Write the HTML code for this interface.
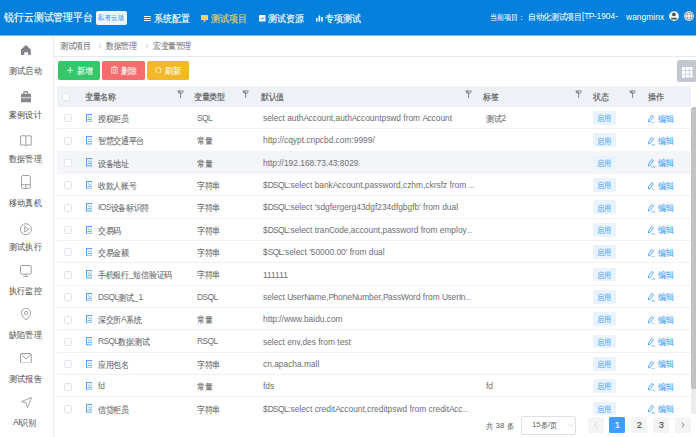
<!DOCTYPE html><html><head><meta charset="utf-8"><style>
html,body{margin:0;padding:0;width:696px;height:437px;overflow:hidden;background:#fff;font-family:'Liberation Sans',sans-serif;}
.r{position:absolute;display:block}
.t{position:absolute;white-space:nowrap;transform-origin:0 0;font-size:20px;line-height:20px}
.l,.u,.d{position:relative;top:-3.4px}
.l,.u,.d{font-size:1.088em}
.u{letter-spacing:-0.07em}
.e{font-size:1.088em;position:relative;top:-3.4px;letter-spacing:-0.08em;color:#9a9a9a}
.d{letter-spacing:0em}
.c{display:inline-block;transform:scaleY(1.12);transform-origin:50% 90%;-webkit-text-stroke-width:var(--sw,0.12px)}
.l,.u,.d,.e{-webkit-text-stroke-width:var(--sw,0px)}
.l,.u,.d{color:var(--lc,inherit)}
.cb{width:8px;height:8px;box-sizing:border-box;border:0.8px solid #e1e4ea;border-radius:1.5px;background:#fff}
</style></head><body><div class="r" style="left:0.00px;top:0.00px;width:696.00px;height:35.60px;background:#0280dc;"></div>
<div class="r" style="left:0.00px;top:35.00px;width:696.00px;height:1.00px;background:linear-gradient(#2b90e0,#cfe6f8);"></div>
<div class="t" style="left:3.80px;top:12.80px;transform:scale(0.4950);color:#ffffff;font-weight:400;--sw:0.3px;"><span class="c">锐行云测试管理平台</span></div>
<div class="r" style="left:96.00px;top:11.00px;width:31.00px;height:14.00px;background:#eef5fe;border-radius:2px"></div>
<div class="t" style="left:98.40px;top:15.40px;transform:scale(0.3250);color:#4d9af0;font-weight:400;--sw:0.2px;"><span class="c">私有云版</span></div>
<svg class="r" style="left:144.00px;top:15.60px" width="7" height="5" viewBox="0 0 7 5"><rect x="0" y="0" width="6.7" height="1" fill="#fff"/><rect x="0" y="2" width="6.7" height="1" fill="#fff"/><rect x="0" y="4" width="6.7" height="1" fill="#fff"/></svg>
<div class="t" style="left:154.00px;top:14.30px;transform:scale(0.4450);color:#ffffff;font-weight:400;--sw:0.3px;"><span class="c">系统配置</span></div>
<svg class="r" style="left:201.30px;top:15.00px" width="7" height="6.5" viewBox="0 0 7 6.5"><rect x="0" y="0" width="7" height="5" rx="0.6" fill="#f5d060"/><rect x="2.5" y="5" width="2" height="1.5" fill="#f5d060"/></svg>
<div class="t" style="left:210.80px;top:14.30px;transform:scale(0.4450);color:#f5d060;font-weight:400;--sw:0.3px;"><span class="c">测试项目</span></div>
<svg class="r" style="left:259.00px;top:15.00px" width="6.5" height="6.5" viewBox="0 0 6.5 6.5"><rect x="0" y="0" width="6.5" height="6.5" rx="0.5" fill="#fff"/><path d="M1.2 4.6 L2.8 3 L3.8 4 L5.4 2.2" stroke="#0780dd" stroke-width="0.9" fill="none"/></svg>
<div class="t" style="left:268.40px;top:14.30px;transform:scale(0.4450);color:#ffffff;font-weight:400;--sw:0.3px;"><span class="c">测试资源</span></div>
<svg class="r" style="left:316.00px;top:15.00px" width="7" height="6.5" viewBox="0 0 7 6.5"><rect x="0" y="3" width="1.6" height="3.5" fill="#fff"/><rect x="2.6" y="0.5" width="1.6" height="6" fill="#fff"/><rect x="5.2" y="2" width="1.6" height="4.5" fill="#fff"/></svg>
<div class="t" style="left:325.20px;top:14.30px;transform:scale(0.4450);color:#ffffff;font-weight:400;--sw:0.3px;"><span class="c">专项测试</span></div>
<div class="t" style="left:490.20px;top:13.70px;transform:scale(0.3550);color:#ffffff;font-weight:400;"><span class="c">当前项目：</span></div>
<div class="t" style="left:528.00px;top:13.90px;transform:scale(0.3850);color:#ffffff;font-weight:400;"><span class="c">自动化测试项目</span><span class="l">[</span><span class="u">TP</span><span class="l">-</span><span class="d">1904</span><span class="l">-</span></div>
<div class="t" style="left:625.80px;top:15.20px;transform:scale(0.3900);color:#ffffff;font-weight:400;"><span class="l">wangminx</span></div>
<svg class="r" style="left:668.80px;top:11.00px" width="10.5" height="10.5" viewBox="0 0 10.5 10.5"><circle cx="5.0" cy="5.1" r="4.9" fill="#fff"/><circle cx="4.9" cy="3.4" r="1.9" fill="#555"/><rect x="2.0" y="6.8" width="6.0" height="1.7" rx="0.4" fill="#555"/></svg>
<svg class="r" style="left:684.20px;top:11.00px" width="10.5" height="10.5" viewBox="0 0 10.5 10.5"><circle cx="4.95" cy="5.1" r="4.9" fill="#fff"/><circle cx="4.95" cy="5.1" r="3.9" fill="none" stroke="#9a9a9a" stroke-width="0.8"/><ellipse cx="4.95" cy="5.1" rx="1.9" ry="3.9" fill="none" stroke="#9a9a9a" stroke-width="0.7"/><path d="M1.2 3.4 H8.7 M1.2 6.8 H8.7" stroke="#9a9a9a" stroke-width="0.7"/></svg>
<div class="r" style="left:52.70px;top:36.00px;width:1.00px;height:401.00px;background:#eeeeee;"></div>
<div class="t" style="left:9.00px;top:66.60px;transform:scale(0.4100);color:#555555;font-weight:400;"><span class="c">测试启动</span></div>
<div class="t" style="left:9.00px;top:110.60px;transform:scale(0.4100);color:#555555;font-weight:400;"><span class="c">案例设计</span></div>
<div class="t" style="left:9.00px;top:154.60px;transform:scale(0.4100);color:#555555;font-weight:400;"><span class="c">数据管理</span></div>
<div class="t" style="left:9.00px;top:198.60px;transform:scale(0.4100);color:#555555;font-weight:400;"><span class="c">移动真机</span></div>
<div class="t" style="left:9.00px;top:242.60px;transform:scale(0.4100);color:#555555;font-weight:400;"><span class="c">测试执行</span></div>
<div class="t" style="left:9.00px;top:286.60px;transform:scale(0.4100);color:#555555;font-weight:400;"><span class="c">执行监控</span></div>
<div class="t" style="left:9.00px;top:330.60px;transform:scale(0.4100);color:#555555;font-weight:400;"><span class="c">缺陷管理</span></div>
<div class="t" style="left:9.00px;top:374.60px;transform:scale(0.4100);color:#555555;font-weight:400;"><span class="c">测试报告</span></div>
<div class="t" style="left:12.80px;top:418.60px;transform:scale(0.4100);color:#555555;font-weight:400;"><span class="u">AI</span><span class="c">识别</span></div>
<svg class="r" style="left:21.10px;top:44.80px" width="10" height="10.5" viewBox="0 0 10 10.5"><path d="M4.95 0 L9.8 4.4 V10.3 H7.1 V7.2 H3.2 V10.3 H0 V4.4 Z" fill="#808287"/></svg>
<svg class="r" style="left:21.10px;top:91.20px" width="10.2" height="11.5" viewBox="0 0 10.2 11.5"><path d="M2.3 2.9 V1.2 Q2.3 0.1 3.4 0.1 H6.0 Q7.1 0.1 7.1 1.2 V2.9 H5.9 V1.3 H3.5 V2.9 Z" fill="#85878c"/><rect x="0" y="2.8" width="10.1" height="8.5" rx="0.5" fill="#85878c"/><rect x="0" y="5.9" width="10.1" height="1.5" fill="#c9cacd"/></svg>
<svg class="r" style="left:20.20px;top:135.20px" width="12" height="11" viewBox="0 0 12 11"><path d="M0.6 1.0 Q3.2 0.3 5.9 1.0 Q8.6 0.3 11.2 1.0 V10.1 Q8.6 9.6 5.9 10.4 Q3.2 9.6 0.6 10.1 Z M5.9 1.0 V10.4" fill="none" stroke="#9b9b9b" stroke-width="0.95"/></svg>
<svg class="r" style="left:21.20px;top:175.10px" width="10" height="14" viewBox="0 0 10 14"><rect x="0.5" y="0.5" width="8.8" height="12.9" rx="1.6" fill="none" stroke="#9b9b9b" stroke-width="0.95"/><path d="M0.5 9.7 H9.3 M4.9 9.7 V13.2" stroke="#9b9b9b" stroke-width="0.9"/></svg>
<svg class="r" style="left:20.20px;top:222.90px" width="12" height="12.5" viewBox="0 0 12 12.5"><circle cx="5.9" cy="6.2" r="5.5" fill="none" stroke="#9b9b9b" stroke-width="0.95"/><path d="M4.7 3.4 L8.7 6.2 L4.7 9.0 Z" fill="none" stroke="#9b9b9b" stroke-width="0.95" stroke-linejoin="round"/></svg>
<svg class="r" style="left:20.20px;top:264.60px" width="12" height="12.5" viewBox="0 0 12 12.5"><rect x="0.5" y="0.5" width="10.8" height="8.6" rx="1.4" fill="none" stroke="#9b9b9b" stroke-width="0.95"/><path d="M5.9 9.1 V11.6 M3.1 11.7 H8.8" stroke="#9b9b9b" stroke-width="0.95"/></svg>
<svg class="r" style="left:21.10px;top:307.60px" width="10.2" height="12.6" viewBox="0 0 10.2 12.6"><path d="M5.1 12.1 C2.2 8.9 0.5 6.6 0.5 4.8 A4.6 4.6 0 0 1 9.7 4.8 C9.7 6.6 8 8.9 5.1 12.1 Z" fill="none" stroke="#9b9b9b" stroke-width="0.95"/><circle cx="5.1" cy="5.1" r="1.7" fill="none" stroke="#9b9b9b" stroke-width="0.95"/></svg>
<svg class="r" style="left:20.20px;top:352.80px" width="12" height="10.6" viewBox="0 0 12 10.6"><rect x="0.5" y="0.5" width="10.8" height="9.6" rx="1.2" fill="none" stroke="#9b9b9b" stroke-width="0.95"/><path d="M1.2 1.2 L5.9 5.9 L10.6 1.2" fill="none" stroke="#9b9b9b" stroke-width="0.95"/></svg>
<svg class="r" style="left:21.00px;top:396.60px" width="11" height="11.4" viewBox="0 0 11 11.4"><path d="M10.5 0.5 L0.6 4.6 L5 5.8 L6.4 10.9 Z" fill="none" stroke="#9b9b9b" stroke-width="0.9" stroke-linejoin="round"/></svg>
<div class="t" style="left:59.60px;top:42.60px;transform:scale(0.3800);color:#707070;font-weight:400;"><span class="c">测试项目</span></div>
<svg class="r" style="left:97.50px;top:42.50px" width="4" height="6" viewBox="0 0 4 6"><path d="M0.6 0.5 L3.2 3 L0.6 5.5" fill="none" stroke="#c0c4cc" stroke-width="0.8"/></svg>
<div class="t" style="left:105.80px;top:42.60px;transform:scale(0.3800);color:#707070;font-weight:400;"><span class="c">数据管理</span></div>
<svg class="r" style="left:145.00px;top:42.50px" width="4" height="6" viewBox="0 0 4 6"><path d="M0.6 0.5 L3.2 3 L0.6 5.5" fill="none" stroke="#c0c4cc" stroke-width="0.8"/></svg>
<div class="t" style="left:152.80px;top:42.60px;transform:scale(0.3800);color:#707070;font-weight:400;"><span class="c">宏变量管理</span></div>
<div class="r" style="left:54.00px;top:56.00px;width:642.00px;height:1.00px;background:#e8e8e8;"></div>
<div class="r" style="left:58.00px;top:60.50px;width:42.00px;height:19.50px;background:#34c86a;border-radius:2px"></div>
<svg class="r" style="left:66.80px;top:66.60px" width="6.4" height="6.6" viewBox="0 0 6.4 6.6"><path d="M3.2 0.2 V6.4 M0.1 3.3 H6.3" stroke="#d9f5e3" stroke-width="1.1"/></svg>
<div class="t" style="left:76.80px;top:67.00px;transform:scale(0.3950);color:#ffffff;font-weight:400;"><span class="c">新增</span></div>
<div class="r" style="left:102.00px;top:60.50px;width:43.00px;height:19.50px;background:#f56c6c;border-radius:2px"></div>
<svg class="r" style="left:110.90px;top:65.80px" width="7.2" height="8.6" viewBox="0 0 7.2 8.6"><path d="M0.2 1.55 H6.8" stroke="#fde0e0" stroke-width="0.85"/><path d="M2.2 1.3 V0.5 H4.9 V1.3" fill="none" stroke="#fde0e0" stroke-width="0.75"/><path d="M0.75 1.6 V7.9 H6.25 V1.6" fill="none" stroke="#fde0e0" stroke-width="0.8"/><rect x="2.35" y="3.1" width="2.3" height="3.3" fill="none" stroke="#fde0e0" stroke-width="0.7"/></svg>
<div class="t" style="left:120.80px;top:67.00px;transform:scale(0.3950);color:#ffffff;font-weight:400;"><span class="c">删除</span></div>
<div class="r" style="left:147.00px;top:60.50px;width:42.20px;height:19.50px;background:#f3b82a;border-radius:2px"></div>
<svg class="r" style="left:155.40px;top:66.50px" width="7" height="6.8" viewBox="0 0 7 6.8"><path d="M0.75 3.0 A2.6 2.6 0 0 1 5.95 3.0" fill="none" stroke="#fdf0cf" stroke-width="0.9"/><path d="M5.95 3.8 A2.6 2.6 0 0 1 0.75 3.8" fill="none" stroke="#fdf0cf" stroke-width="0.9"/><path d="M4.9 2.4 L5.95 3.3 L6.9 2.4" fill="none" stroke="#fdf0cf" stroke-width="0.8"/><path d="M-0.2 4.4 L0.75 3.5 L1.8 4.4" fill="none" stroke="#fdf0cf" stroke-width="0.8"/></svg>
<div class="t" style="left:165.00px;top:66.80px;transform:scale(0.3950);color:#ffffff;font-weight:400;"><span class="c">刷新</span></div>
<div class="r" style="left:677.20px;top:60.00px;width:19.50px;height:21.60px;background:#c3c7cf;border-radius:2.5px"></div>
<svg class="r" style="left:681.60px;top:66.60px" width="11" height="11" viewBox="0 0 11 11"><rect x="0.00" y="0.00" width="3.1" height="3.1" fill="#fff"/><rect x="3.75" y="0.00" width="3.1" height="3.1" fill="#fff"/><rect x="7.50" y="0.00" width="3.1" height="3.1" fill="#fff"/><rect x="0.00" y="3.75" width="3.1" height="3.1" fill="#fff"/><rect x="3.75" y="3.75" width="3.1" height="3.1" fill="#fff"/><rect x="7.50" y="3.75" width="3.1" height="3.1" fill="#fff"/><rect x="0.00" y="7.50" width="3.1" height="3.1" fill="#fff"/><rect x="3.75" y="7.50" width="3.1" height="3.1" fill="#fff"/><rect x="7.50" y="7.50" width="3.1" height="3.1" fill="#fff"/></svg>
<div class="r" style="left:56.50px;top:86.00px;width:634.30px;height:20.80px;background:#eef1f6;"></div>
<div class="r cb" style="left:61.60px;top:92.60px"></div>
<div class="t" style="left:84.90px;top:94.30px;transform:scale(0.3850);color:#555555;font-weight:400;--sw:0.3px;"><span class="c">变量名称</span></div>
<div class="t" style="left:194.40px;top:94.30px;transform:scale(0.3850);color:#555555;font-weight:400;--sw:0.3px;"><span class="c">变量类型</span></div>
<div class="t" style="left:260.80px;top:94.30px;transform:scale(0.3850);color:#555555;font-weight:400;--sw:0.3px;"><span class="c">默认值</span></div>
<div class="t" style="left:483.40px;top:94.30px;transform:scale(0.3850);color:#555555;font-weight:400;--sw:0.3px;"><span class="c">标签</span></div>
<div class="t" style="left:592.80px;top:94.10px;transform:scale(0.3850);color:#555555;font-weight:400;--sw:0.3px;"><span class="c">状态</span></div>
<div class="t" style="left:647.80px;top:94.10px;transform:scale(0.3850);color:#555555;font-weight:400;--sw:0.3px;"><span class="c">操作</span></div>
<svg class="r" style="left:176.60px;top:89.80px" width="7.2" height="8" viewBox="0 0 7.2 8"><path d="M0.3 0.7 Q3.6 -0.3 6.9 0.7 Q6.6 2.9 4.1 3.9 V7.9 H3.1 V3.9 Q0.6 2.9 0.3 0.7 Z" fill="#85878b"/><circle cx="4.7" cy="1.7" r="0.9" fill="#dfe2e8"/><path d="M3.1 1.0 L3.6 3.2" stroke="#dfe2e8" stroke-width="0.4"/></svg>
<svg class="r" style="left:242.10px;top:89.80px" width="7.2" height="8" viewBox="0 0 7.2 8"><path d="M0.3 0.7 Q3.6 -0.3 6.9 0.7 Q6.6 2.9 4.1 3.9 V7.9 H3.1 V3.9 Q0.6 2.9 0.3 0.7 Z" fill="#85878b"/><circle cx="4.7" cy="1.7" r="0.9" fill="#dfe2e8"/><path d="M3.1 1.0 L3.6 3.2" stroke="#dfe2e8" stroke-width="0.4"/></svg>
<svg class="r" style="left:464.90px;top:89.80px" width="7.2" height="8" viewBox="0 0 7.2 8"><path d="M0.3 0.7 Q3.6 -0.3 6.9 0.7 Q6.6 2.9 4.1 3.9 V7.9 H3.1 V3.9 Q0.6 2.9 0.3 0.7 Z" fill="#85878b"/><circle cx="4.7" cy="1.7" r="0.9" fill="#dfe2e8"/><path d="M3.1 1.0 L3.6 3.2" stroke="#dfe2e8" stroke-width="0.4"/></svg>
<svg class="r" style="left:574.60px;top:89.80px" width="7.2" height="8" viewBox="0 0 7.2 8"><path d="M0.3 0.7 Q3.6 -0.3 6.9 0.7 Q6.6 2.9 4.1 3.9 V7.9 H3.1 V3.9 Q0.6 2.9 0.3 0.7 Z" fill="#85878b"/><circle cx="4.7" cy="1.7" r="0.9" fill="#dfe2e8"/><path d="M3.1 1.0 L3.6 3.2" stroke="#dfe2e8" stroke-width="0.4"/></svg>
<svg class="r" style="left:629.40px;top:89.80px" width="7.2" height="8" viewBox="0 0 7.2 8"><path d="M0.3 0.7 Q3.6 -0.3 6.9 0.7 Q6.6 2.9 4.1 3.9 V7.9 H3.1 V3.9 Q0.6 2.9 0.3 0.7 Z" fill="#85878b"/><circle cx="4.7" cy="1.7" r="0.9" fill="#dfe2e8"/><path d="M3.1 1.0 L3.6 3.2" stroke="#dfe2e8" stroke-width="0.4"/></svg>
<div class="r" style="left:0;top:106.8px;width:696px;height:308.40px;overflow:hidden">
<div class="r" style="left:56.50px;top:21.45px;width:634.30px;height:0.90px;background:#eff1f5;"></div>
<div class="r cb" style="left:64.00px;top:7.60px"></div>
<svg class="r" style="left:85.60px;top:7.00px" width="6.6" height="8.4" viewBox="0 0 6.6 8.4"><rect x="0.5" y="0.55" width="5.6" height="7.4" fill="none" stroke="#4a9ff5" stroke-width="0.95"/><path d="M2.3 2.3 Q2.5 3.9 4.6 3.9 M1.6 5.6 H5.0" fill="none" stroke="#4a9ff5" stroke-width="0.85"/></svg>
<div class="t" style="left:97.60px;top:9.20px;transform:scale(0.3850);color:#606266;font-weight:400;--lc:#6c6e72;"><span class="c">授权柜员</span></div>
<div class="t" style="left:196.80px;top:9.20px;transform:scale(0.3850);color:#606266;font-weight:400;--lc:#6c6e72;"><span class="u">SQL</span></div>
<div class="t" style="left:262.80px;top:9.30px;transform:scale(0.3850);color:#606266;font-weight:400;--lc:#6c6e72;"><span class="l">select auth</span><span class="u">A</span><span class="l">ccount,auth</span><span class="u">A</span><span class="l">ccountpswd from </span><span class="u">A</span><span class="l">ccount</span></div>
<div class="t" style="left:485.80px;top:9.20px;transform:scale(0.3850);color:#606266;font-weight:400;--lc:#6c6e72;"><span class="c">测试</span><span class="d">2</span></div>
<div class="r" style="left:592.60px;top:4.30px;width:23.00px;height:13.70px;background:#e9f3fe;border-radius:2px"></div>
<div class="t" style="left:596.80px;top:8.40px;transform:scale(0.3450);color:#4ea5fb;font-weight:400;"><span class="c">启用</span></div>
<svg class="r" style="left:647.80px;top:7.90px" width="7.2" height="8.6" viewBox="0 0 7.2 8.6"><path d="M0.55 7.0 L0.45 5.1 L3.75 0.5 L5.5 1.7 L2.25 6.3 Z" fill="none" stroke="#409eff" stroke-width="0.85" stroke-linejoin="round"/><path d="M3.5 7.95 H6.9" stroke="#409eff" stroke-width="0.8"/></svg>
<div class="t" style="left:657.60px;top:8.80px;transform:scale(0.3850);color:#409eff;font-weight:400;"><span class="c">编辑</span></div>
<div class="r" style="left:56.50px;top:43.80px;width:634.30px;height:0.90px;background:#eff1f5;"></div>
<div class="r cb" style="left:64.00px;top:29.95px"></div>
<svg class="r" style="left:85.60px;top:29.35px" width="6.6" height="8.4" viewBox="0 0 6.6 8.4"><rect x="0.5" y="0.55" width="5.6" height="7.4" fill="none" stroke="#4a9ff5" stroke-width="0.95"/><path d="M2.3 2.3 Q2.5 3.9 4.6 3.9 M1.6 5.6 H5.0" fill="none" stroke="#4a9ff5" stroke-width="0.85"/></svg>
<div class="t" style="left:97.60px;top:31.55px;transform:scale(0.3850);color:#606266;font-weight:400;--lc:#6c6e72;"><span class="c">智慧交通平台</span></div>
<div class="t" style="left:196.80px;top:31.55px;transform:scale(0.3850);color:#606266;font-weight:400;--lc:#6c6e72;"><span class="c">常量</span></div>
<div class="t" style="left:262.80px;top:31.65px;transform:scale(0.3850);color:#606266;font-weight:400;--lc:#6c6e72;"><span class="l">http://cqypt.cnpcbd.com:</span><span class="d">9999</span><span class="l">/</span></div>
<div class="r" style="left:592.60px;top:26.65px;width:23.00px;height:13.70px;background:#e9f3fe;border-radius:2px"></div>
<div class="t" style="left:596.80px;top:30.75px;transform:scale(0.3450);color:#4ea5fb;font-weight:400;"><span class="c">启用</span></div>
<svg class="r" style="left:647.80px;top:30.25px" width="7.2" height="8.6" viewBox="0 0 7.2 8.6"><path d="M0.55 7.0 L0.45 5.1 L3.75 0.5 L5.5 1.7 L2.25 6.3 Z" fill="none" stroke="#409eff" stroke-width="0.85" stroke-linejoin="round"/><path d="M3.5 7.95 H6.9" stroke="#409eff" stroke-width="0.8"/></svg>
<div class="t" style="left:657.60px;top:31.15px;transform:scale(0.3850);color:#409eff;font-weight:400;"><span class="c">编辑</span></div>
<div class="r" style="left:56.50px;top:44.70px;width:634.30px;height:22.35px;background:#f3f5f9;"></div>
<div class="r" style="left:56.50px;top:66.15px;width:634.30px;height:0.90px;background:#eff1f5;"></div>
<div class="r cb" style="left:64.00px;top:52.30px"></div>
<svg class="r" style="left:85.60px;top:51.70px" width="6.6" height="8.4" viewBox="0 0 6.6 8.4"><rect x="0.5" y="0.55" width="5.6" height="7.4" fill="none" stroke="#4a9ff5" stroke-width="0.95"/><path d="M2.3 2.3 Q2.5 3.9 4.6 3.9 M1.6 5.6 H5.0" fill="none" stroke="#4a9ff5" stroke-width="0.85"/></svg>
<div class="t" style="left:97.60px;top:53.90px;transform:scale(0.3850);color:#606266;font-weight:400;--lc:#6c6e72;"><span class="c">设备地址</span></div>
<div class="t" style="left:196.80px;top:53.90px;transform:scale(0.3850);color:#606266;font-weight:400;--lc:#6c6e72;"><span class="c">常量</span></div>
<div class="t" style="left:262.80px;top:54.00px;transform:scale(0.3850);color:#606266;font-weight:400;--lc:#6c6e72;"><span class="l">http://</span><span class="d">192</span><span class="l">.</span><span class="d">168</span><span class="l">.</span><span class="d">73</span><span class="l">.</span><span class="d">43</span><span class="l">:</span><span class="d">8029</span></div>
<div class="r" style="left:592.60px;top:49.00px;width:23.00px;height:13.70px;background:#e9f3fe;border-radius:2px"></div>
<div class="t" style="left:596.80px;top:53.10px;transform:scale(0.3450);color:#4ea5fb;font-weight:400;"><span class="c">启用</span></div>
<svg class="r" style="left:647.80px;top:52.60px" width="7.2" height="8.6" viewBox="0 0 7.2 8.6"><path d="M0.55 7.0 L0.45 5.1 L3.75 0.5 L5.5 1.7 L2.25 6.3 Z" fill="none" stroke="#409eff" stroke-width="0.85" stroke-linejoin="round"/><path d="M3.5 7.95 H6.9" stroke="#409eff" stroke-width="0.8"/></svg>
<div class="t" style="left:657.60px;top:53.50px;transform:scale(0.3850);color:#409eff;font-weight:400;"><span class="c">编辑</span></div>
<div class="r" style="left:56.50px;top:88.50px;width:634.30px;height:0.90px;background:#eff1f5;"></div>
<div class="r cb" style="left:64.00px;top:74.65px"></div>
<svg class="r" style="left:85.60px;top:74.05px" width="6.6" height="8.4" viewBox="0 0 6.6 8.4"><rect x="0.5" y="0.55" width="5.6" height="7.4" fill="none" stroke="#4a9ff5" stroke-width="0.95"/><path d="M2.3 2.3 Q2.5 3.9 4.6 3.9 M1.6 5.6 H5.0" fill="none" stroke="#4a9ff5" stroke-width="0.85"/></svg>
<div class="t" style="left:97.60px;top:76.25px;transform:scale(0.3850);color:#606266;font-weight:400;--lc:#6c6e72;"><span class="c">收款人账号</span></div>
<div class="t" style="left:196.80px;top:76.25px;transform:scale(0.3850);color:#606266;font-weight:400;--lc:#6c6e72;"><span class="c">字符串</span></div>
<div class="t" style="left:262.80px;top:76.35px;transform:scale(0.3850);color:#606266;font-weight:400;--lc:#6c6e72;"><span class="l">$</span><span class="u">DSQL</span><span class="l">:select bank</span><span class="u">A</span><span class="l">ccount,password,czhm,ckrsfz from </span><span class="e">...</span></div>
<div class="r" style="left:592.60px;top:71.35px;width:23.00px;height:13.70px;background:#e9f3fe;border-radius:2px"></div>
<div class="t" style="left:596.80px;top:75.45px;transform:scale(0.3450);color:#4ea5fb;font-weight:400;"><span class="c">启用</span></div>
<svg class="r" style="left:647.80px;top:74.95px" width="7.2" height="8.6" viewBox="0 0 7.2 8.6"><path d="M0.55 7.0 L0.45 5.1 L3.75 0.5 L5.5 1.7 L2.25 6.3 Z" fill="none" stroke="#409eff" stroke-width="0.85" stroke-linejoin="round"/><path d="M3.5 7.95 H6.9" stroke="#409eff" stroke-width="0.8"/></svg>
<div class="t" style="left:657.60px;top:75.85px;transform:scale(0.3850);color:#409eff;font-weight:400;"><span class="c">编辑</span></div>
<div class="r" style="left:56.50px;top:110.85px;width:634.30px;height:0.90px;background:#eff1f5;"></div>
<div class="r cb" style="left:64.00px;top:97.00px"></div>
<svg class="r" style="left:85.60px;top:96.40px" width="6.6" height="8.4" viewBox="0 0 6.6 8.4"><rect x="0.5" y="0.55" width="5.6" height="7.4" fill="none" stroke="#4a9ff5" stroke-width="0.95"/><path d="M2.3 2.3 Q2.5 3.9 4.6 3.9 M1.6 5.6 H5.0" fill="none" stroke="#4a9ff5" stroke-width="0.85"/></svg>
<div class="t" style="left:97.60px;top:98.60px;transform:scale(0.3850);color:#606266;font-weight:400;--lc:#6c6e72;"><span class="u">IOS</span><span class="c">设备标识符</span></div>
<div class="t" style="left:196.80px;top:98.60px;transform:scale(0.3850);color:#606266;font-weight:400;--lc:#6c6e72;"><span class="c">字符串</span></div>
<div class="t" style="left:262.80px;top:98.70px;transform:scale(0.3850);color:#606266;font-weight:400;--lc:#6c6e72;"><span class="l">$</span><span class="u">DSQL</span><span class="l">:select &#x27;sdgfergerg</span><span class="d">43</span><span class="l">dgf</span><span class="d">234</span><span class="l">dfgbgfb&#x27; from dual</span></div>
<div class="r" style="left:592.60px;top:93.70px;width:23.00px;height:13.70px;background:#e9f3fe;border-radius:2px"></div>
<div class="t" style="left:596.80px;top:97.80px;transform:scale(0.3450);color:#4ea5fb;font-weight:400;"><span class="c">启用</span></div>
<svg class="r" style="left:647.80px;top:97.30px" width="7.2" height="8.6" viewBox="0 0 7.2 8.6"><path d="M0.55 7.0 L0.45 5.1 L3.75 0.5 L5.5 1.7 L2.25 6.3 Z" fill="none" stroke="#409eff" stroke-width="0.85" stroke-linejoin="round"/><path d="M3.5 7.95 H6.9" stroke="#409eff" stroke-width="0.8"/></svg>
<div class="t" style="left:657.60px;top:98.20px;transform:scale(0.3850);color:#409eff;font-weight:400;"><span class="c">编辑</span></div>
<div class="r" style="left:56.50px;top:133.20px;width:634.30px;height:0.90px;background:#eff1f5;"></div>
<div class="r cb" style="left:64.00px;top:119.35px"></div>
<svg class="r" style="left:85.60px;top:118.75px" width="6.6" height="8.4" viewBox="0 0 6.6 8.4"><rect x="0.5" y="0.55" width="5.6" height="7.4" fill="none" stroke="#4a9ff5" stroke-width="0.95"/><path d="M2.3 2.3 Q2.5 3.9 4.6 3.9 M1.6 5.6 H5.0" fill="none" stroke="#4a9ff5" stroke-width="0.85"/></svg>
<div class="t" style="left:97.60px;top:120.95px;transform:scale(0.3850);color:#606266;font-weight:400;--lc:#6c6e72;"><span class="c">交易码</span></div>
<div class="t" style="left:196.80px;top:120.95px;transform:scale(0.3850);color:#606266;font-weight:400;--lc:#6c6e72;"><span class="c">字符串</span></div>
<div class="t" style="left:262.80px;top:121.05px;transform:scale(0.3850);color:#606266;font-weight:400;--lc:#6c6e72;"><span class="l">$</span><span class="u">DSQL</span><span class="l">:select tran</span><span class="u">C</span><span class="l">ode,account,password from employ</span><span class="e">...</span></div>
<div class="r" style="left:592.60px;top:116.05px;width:23.00px;height:13.70px;background:#e9f3fe;border-radius:2px"></div>
<div class="t" style="left:596.80px;top:120.15px;transform:scale(0.3450);color:#4ea5fb;font-weight:400;"><span class="c">启用</span></div>
<svg class="r" style="left:647.80px;top:119.65px" width="7.2" height="8.6" viewBox="0 0 7.2 8.6"><path d="M0.55 7.0 L0.45 5.1 L3.75 0.5 L5.5 1.7 L2.25 6.3 Z" fill="none" stroke="#409eff" stroke-width="0.85" stroke-linejoin="round"/><path d="M3.5 7.95 H6.9" stroke="#409eff" stroke-width="0.8"/></svg>
<div class="t" style="left:657.60px;top:120.55px;transform:scale(0.3850);color:#409eff;font-weight:400;"><span class="c">编辑</span></div>
<div class="r" style="left:56.50px;top:155.55px;width:634.30px;height:0.90px;background:#eff1f5;"></div>
<div class="r cb" style="left:64.00px;top:141.70px"></div>
<svg class="r" style="left:85.60px;top:141.10px" width="6.6" height="8.4" viewBox="0 0 6.6 8.4"><rect x="0.5" y="0.55" width="5.6" height="7.4" fill="none" stroke="#4a9ff5" stroke-width="0.95"/><path d="M2.3 2.3 Q2.5 3.9 4.6 3.9 M1.6 5.6 H5.0" fill="none" stroke="#4a9ff5" stroke-width="0.85"/></svg>
<div class="t" style="left:97.60px;top:143.30px;transform:scale(0.3850);color:#606266;font-weight:400;--lc:#6c6e72;"><span class="c">交易金额</span></div>
<div class="t" style="left:196.80px;top:143.30px;transform:scale(0.3850);color:#606266;font-weight:400;--lc:#6c6e72;"><span class="c">字符串</span></div>
<div class="t" style="left:262.80px;top:143.40px;transform:scale(0.3850);color:#606266;font-weight:400;--lc:#6c6e72;"><span class="l">$</span><span class="u">SQL</span><span class="l">:select &#x27;</span><span class="d">50000</span><span class="l">.</span><span class="d">00</span><span class="l">&#x27; from dual</span></div>
<div class="r" style="left:592.60px;top:138.40px;width:23.00px;height:13.70px;background:#e9f3fe;border-radius:2px"></div>
<div class="t" style="left:596.80px;top:142.50px;transform:scale(0.3450);color:#4ea5fb;font-weight:400;"><span class="c">启用</span></div>
<svg class="r" style="left:647.80px;top:142.00px" width="7.2" height="8.6" viewBox="0 0 7.2 8.6"><path d="M0.55 7.0 L0.45 5.1 L3.75 0.5 L5.5 1.7 L2.25 6.3 Z" fill="none" stroke="#409eff" stroke-width="0.85" stroke-linejoin="round"/><path d="M3.5 7.95 H6.9" stroke="#409eff" stroke-width="0.8"/></svg>
<div class="t" style="left:657.60px;top:142.90px;transform:scale(0.3850);color:#409eff;font-weight:400;"><span class="c">编辑</span></div>
<div class="r" style="left:56.50px;top:177.90px;width:634.30px;height:0.90px;background:#eff1f5;"></div>
<div class="r cb" style="left:64.00px;top:164.05px"></div>
<svg class="r" style="left:85.60px;top:163.45px" width="6.6" height="8.4" viewBox="0 0 6.6 8.4"><rect x="0.5" y="0.55" width="5.6" height="7.4" fill="none" stroke="#4a9ff5" stroke-width="0.95"/><path d="M2.3 2.3 Q2.5 3.9 4.6 3.9 M1.6 5.6 H5.0" fill="none" stroke="#4a9ff5" stroke-width="0.85"/></svg>
<div class="t" style="left:97.60px;top:165.65px;transform:scale(0.3850);color:#606266;font-weight:400;--lc:#6c6e72;"><span class="c">手机银行</span><span class="l">_</span><span class="c">短信验证码</span></div>
<div class="t" style="left:196.80px;top:165.65px;transform:scale(0.3850);color:#606266;font-weight:400;--lc:#6c6e72;"><span class="c">字符串</span></div>
<div class="t" style="left:262.80px;top:165.75px;transform:scale(0.3850);color:#606266;font-weight:400;--lc:#6c6e72;"><span class="d">111111</span></div>
<div class="r" style="left:592.60px;top:160.75px;width:23.00px;height:13.70px;background:#e9f3fe;border-radius:2px"></div>
<div class="t" style="left:596.80px;top:164.85px;transform:scale(0.3450);color:#4ea5fb;font-weight:400;"><span class="c">启用</span></div>
<svg class="r" style="left:647.80px;top:164.35px" width="7.2" height="8.6" viewBox="0 0 7.2 8.6"><path d="M0.55 7.0 L0.45 5.1 L3.75 0.5 L5.5 1.7 L2.25 6.3 Z" fill="none" stroke="#409eff" stroke-width="0.85" stroke-linejoin="round"/><path d="M3.5 7.95 H6.9" stroke="#409eff" stroke-width="0.8"/></svg>
<div class="t" style="left:657.60px;top:165.25px;transform:scale(0.3850);color:#409eff;font-weight:400;"><span class="c">编辑</span></div>
<div class="r" style="left:56.50px;top:200.25px;width:634.30px;height:0.90px;background:#eff1f5;"></div>
<div class="r cb" style="left:64.00px;top:186.40px"></div>
<svg class="r" style="left:85.60px;top:185.80px" width="6.6" height="8.4" viewBox="0 0 6.6 8.4"><rect x="0.5" y="0.55" width="5.6" height="7.4" fill="none" stroke="#4a9ff5" stroke-width="0.95"/><path d="M2.3 2.3 Q2.5 3.9 4.6 3.9 M1.6 5.6 H5.0" fill="none" stroke="#4a9ff5" stroke-width="0.85"/></svg>
<div class="t" style="left:97.60px;top:188.00px;transform:scale(0.3850);color:#606266;font-weight:400;--lc:#6c6e72;"><span class="u">DSQL</span><span class="c">测试</span><span class="l">_</span><span class="d">1</span></div>
<div class="t" style="left:196.80px;top:188.00px;transform:scale(0.3850);color:#606266;font-weight:400;--lc:#6c6e72;"><span class="u">DSQL</span></div>
<div class="t" style="left:262.80px;top:188.10px;transform:scale(0.3850);color:#606266;font-weight:400;--lc:#6c6e72;"><span class="l">select </span><span class="u">U</span><span class="l">ser</span><span class="u">N</span><span class="l">ame,</span><span class="u">P</span><span class="l">hone</span><span class="u">N</span><span class="l">umber,</span><span class="u">P</span><span class="l">ass</span><span class="u">W</span><span class="l">ord from </span><span class="u">U</span><span class="l">ser</span><span class="u">I</span><span class="l">n</span><span class="e">...</span></div>
<div class="r" style="left:592.60px;top:183.10px;width:23.00px;height:13.70px;background:#e9f3fe;border-radius:2px"></div>
<div class="t" style="left:596.80px;top:187.20px;transform:scale(0.3450);color:#4ea5fb;font-weight:400;"><span class="c">启用</span></div>
<svg class="r" style="left:647.80px;top:186.70px" width="7.2" height="8.6" viewBox="0 0 7.2 8.6"><path d="M0.55 7.0 L0.45 5.1 L3.75 0.5 L5.5 1.7 L2.25 6.3 Z" fill="none" stroke="#409eff" stroke-width="0.85" stroke-linejoin="round"/><path d="M3.5 7.95 H6.9" stroke="#409eff" stroke-width="0.8"/></svg>
<div class="t" style="left:657.60px;top:187.60px;transform:scale(0.3850);color:#409eff;font-weight:400;"><span class="c">编辑</span></div>
<div class="r" style="left:56.50px;top:222.60px;width:634.30px;height:0.90px;background:#eff1f5;"></div>
<div class="r cb" style="left:64.00px;top:208.75px"></div>
<svg class="r" style="left:85.60px;top:208.15px" width="6.6" height="8.4" viewBox="0 0 6.6 8.4"><rect x="0.5" y="0.55" width="5.6" height="7.4" fill="none" stroke="#4a9ff5" stroke-width="0.95"/><path d="M2.3 2.3 Q2.5 3.9 4.6 3.9 M1.6 5.6 H5.0" fill="none" stroke="#4a9ff5" stroke-width="0.85"/></svg>
<div class="t" style="left:97.60px;top:210.35px;transform:scale(0.3850);color:#606266;font-weight:400;--lc:#6c6e72;"><span class="c">深交所</span><span class="u">A</span><span class="c">系统</span></div>
<div class="t" style="left:196.80px;top:210.35px;transform:scale(0.3850);color:#606266;font-weight:400;--lc:#6c6e72;"><span class="c">常量</span></div>
<div class="t" style="left:262.80px;top:210.45px;transform:scale(0.3850);color:#606266;font-weight:400;--lc:#6c6e72;"><span class="l">http://www.baidu.com</span></div>
<div class="r" style="left:592.60px;top:205.45px;width:23.00px;height:13.70px;background:#e9f3fe;border-radius:2px"></div>
<div class="t" style="left:596.80px;top:209.55px;transform:scale(0.3450);color:#4ea5fb;font-weight:400;"><span class="c">启用</span></div>
<svg class="r" style="left:647.80px;top:209.05px" width="7.2" height="8.6" viewBox="0 0 7.2 8.6"><path d="M0.55 7.0 L0.45 5.1 L3.75 0.5 L5.5 1.7 L2.25 6.3 Z" fill="none" stroke="#409eff" stroke-width="0.85" stroke-linejoin="round"/><path d="M3.5 7.95 H6.9" stroke="#409eff" stroke-width="0.8"/></svg>
<div class="t" style="left:657.60px;top:209.95px;transform:scale(0.3850);color:#409eff;font-weight:400;"><span class="c">编辑</span></div>
<div class="r" style="left:56.50px;top:244.95px;width:634.30px;height:0.90px;background:#eff1f5;"></div>
<div class="r cb" style="left:64.00px;top:231.10px"></div>
<svg class="r" style="left:85.60px;top:230.50px" width="6.6" height="8.4" viewBox="0 0 6.6 8.4"><rect x="0.5" y="0.55" width="5.6" height="7.4" fill="none" stroke="#4a9ff5" stroke-width="0.95"/><path d="M2.3 2.3 Q2.5 3.9 4.6 3.9 M1.6 5.6 H5.0" fill="none" stroke="#4a9ff5" stroke-width="0.85"/></svg>
<div class="t" style="left:97.60px;top:232.70px;transform:scale(0.3850);color:#606266;font-weight:400;--lc:#6c6e72;"><span class="u">RSQL</span><span class="c">数据测试</span></div>
<div class="t" style="left:196.80px;top:232.70px;transform:scale(0.3850);color:#606266;font-weight:400;--lc:#6c6e72;"><span class="u">RSQL</span></div>
<div class="t" style="left:262.80px;top:232.80px;transform:scale(0.3850);color:#606266;font-weight:400;--lc:#6c6e72;"><span class="l">select env,des from test</span></div>
<div class="r" style="left:592.60px;top:227.80px;width:23.00px;height:13.70px;background:#e9f3fe;border-radius:2px"></div>
<div class="t" style="left:596.80px;top:231.90px;transform:scale(0.3450);color:#4ea5fb;font-weight:400;"><span class="c">启用</span></div>
<svg class="r" style="left:647.80px;top:231.40px" width="7.2" height="8.6" viewBox="0 0 7.2 8.6"><path d="M0.55 7.0 L0.45 5.1 L3.75 0.5 L5.5 1.7 L2.25 6.3 Z" fill="none" stroke="#409eff" stroke-width="0.85" stroke-linejoin="round"/><path d="M3.5 7.95 H6.9" stroke="#409eff" stroke-width="0.8"/></svg>
<div class="t" style="left:657.60px;top:232.30px;transform:scale(0.3850);color:#409eff;font-weight:400;"><span class="c">编辑</span></div>
<div class="r" style="left:56.50px;top:267.30px;width:634.30px;height:0.90px;background:#eff1f5;"></div>
<div class="r cb" style="left:64.00px;top:253.45px"></div>
<svg class="r" style="left:85.60px;top:252.85px" width="6.6" height="8.4" viewBox="0 0 6.6 8.4"><rect x="0.5" y="0.55" width="5.6" height="7.4" fill="none" stroke="#4a9ff5" stroke-width="0.95"/><path d="M2.3 2.3 Q2.5 3.9 4.6 3.9 M1.6 5.6 H5.0" fill="none" stroke="#4a9ff5" stroke-width="0.85"/></svg>
<div class="t" style="left:97.60px;top:255.05px;transform:scale(0.3850);color:#606266;font-weight:400;--lc:#6c6e72;"><span class="c">应用包名</span></div>
<div class="t" style="left:196.80px;top:255.05px;transform:scale(0.3850);color:#606266;font-weight:400;--lc:#6c6e72;"><span class="c">字符串</span></div>
<div class="t" style="left:262.80px;top:255.15px;transform:scale(0.3850);color:#606266;font-weight:400;--lc:#6c6e72;"><span class="l">cn.apacha.mall</span></div>
<div class="r" style="left:592.60px;top:250.15px;width:23.00px;height:13.70px;background:#e9f3fe;border-radius:2px"></div>
<div class="t" style="left:596.80px;top:254.25px;transform:scale(0.3450);color:#4ea5fb;font-weight:400;"><span class="c">启用</span></div>
<svg class="r" style="left:647.80px;top:253.75px" width="7.2" height="8.6" viewBox="0 0 7.2 8.6"><path d="M0.55 7.0 L0.45 5.1 L3.75 0.5 L5.5 1.7 L2.25 6.3 Z" fill="none" stroke="#409eff" stroke-width="0.85" stroke-linejoin="round"/><path d="M3.5 7.95 H6.9" stroke="#409eff" stroke-width="0.8"/></svg>
<div class="t" style="left:657.60px;top:254.65px;transform:scale(0.3850);color:#409eff;font-weight:400;"><span class="c">编辑</span></div>
<div class="r" style="left:56.50px;top:289.65px;width:634.30px;height:0.90px;background:#eff1f5;"></div>
<div class="r cb" style="left:64.00px;top:275.80px"></div>
<svg class="r" style="left:85.60px;top:275.20px" width="6.6" height="8.4" viewBox="0 0 6.6 8.4"><rect x="0.5" y="0.55" width="5.6" height="7.4" fill="none" stroke="#4a9ff5" stroke-width="0.95"/><path d="M2.3 2.3 Q2.5 3.9 4.6 3.9 M1.6 5.6 H5.0" fill="none" stroke="#4a9ff5" stroke-width="0.85"/></svg>
<div class="t" style="left:97.60px;top:277.40px;transform:scale(0.3850);color:#606266;font-weight:400;--lc:#6c6e72;"><span class="l">fd</span></div>
<div class="t" style="left:196.80px;top:277.40px;transform:scale(0.3850);color:#606266;font-weight:400;--lc:#6c6e72;"><span class="c">常量</span></div>
<div class="t" style="left:262.80px;top:277.50px;transform:scale(0.3850);color:#606266;font-weight:400;--lc:#6c6e72;"><span class="l">fds</span></div>
<div class="t" style="left:485.80px;top:277.40px;transform:scale(0.3850);color:#606266;font-weight:400;--lc:#6c6e72;"><span class="l">fd</span></div>
<div class="r" style="left:592.60px;top:272.50px;width:23.00px;height:13.70px;background:#e9f3fe;border-radius:2px"></div>
<div class="t" style="left:596.80px;top:276.60px;transform:scale(0.3450);color:#4ea5fb;font-weight:400;"><span class="c">启用</span></div>
<svg class="r" style="left:647.80px;top:276.10px" width="7.2" height="8.6" viewBox="0 0 7.2 8.6"><path d="M0.55 7.0 L0.45 5.1 L3.75 0.5 L5.5 1.7 L2.25 6.3 Z" fill="none" stroke="#409eff" stroke-width="0.85" stroke-linejoin="round"/><path d="M3.5 7.95 H6.9" stroke="#409eff" stroke-width="0.8"/></svg>
<div class="t" style="left:657.60px;top:277.00px;transform:scale(0.3850);color:#409eff;font-weight:400;"><span class="c">编辑</span></div>
<div class="r" style="left:56.50px;top:312.00px;width:634.30px;height:0.90px;background:#eff1f5;"></div>
<div class="r cb" style="left:64.00px;top:298.15px"></div>
<svg class="r" style="left:85.60px;top:297.55px" width="6.6" height="8.4" viewBox="0 0 6.6 8.4"><rect x="0.5" y="0.55" width="5.6" height="7.4" fill="none" stroke="#4a9ff5" stroke-width="0.95"/><path d="M2.3 2.3 Q2.5 3.9 4.6 3.9 M1.6 5.6 H5.0" fill="none" stroke="#4a9ff5" stroke-width="0.85"/></svg>
<div class="t" style="left:97.60px;top:299.75px;transform:scale(0.3850);color:#606266;font-weight:400;--lc:#6c6e72;"><span class="c">信贷柜员</span></div>
<div class="t" style="left:196.80px;top:299.75px;transform:scale(0.3850);color:#606266;font-weight:400;--lc:#6c6e72;"><span class="c">字符串</span></div>
<div class="t" style="left:262.80px;top:299.85px;transform:scale(0.3850);color:#606266;font-weight:400;--lc:#6c6e72;"><span class="l">$</span><span class="u">DSQL</span><span class="l">:select credit</span><span class="u">A</span><span class="l">ccount,creditpswd from credit</span><span class="u">A</span><span class="l">cc</span><span class="e">...</span></div>
<div class="r" style="left:592.60px;top:294.85px;width:23.00px;height:13.70px;background:#e9f3fe;border-radius:2px"></div>
<div class="t" style="left:596.80px;top:298.95px;transform:scale(0.3450);color:#4ea5fb;font-weight:400;"><span class="c">启用</span></div>
<svg class="r" style="left:647.80px;top:298.45px" width="7.2" height="8.6" viewBox="0 0 7.2 8.6"><path d="M0.55 7.0 L0.45 5.1 L3.75 0.5 L5.5 1.7 L2.25 6.3 Z" fill="none" stroke="#409eff" stroke-width="0.85" stroke-linejoin="round"/><path d="M3.5 7.95 H6.9" stroke="#409eff" stroke-width="0.8"/></svg>
<div class="t" style="left:657.60px;top:299.35px;transform:scale(0.3850);color:#409eff;font-weight:400;"><span class="c">编辑</span></div>
<div class="r" style="left:56.50px;top:307.80px;width:634.30px;height:0.90px;background:#eff1f5;"></div>
</div>
<div class="r" style="left:691.00px;top:107.30px;width:6.00px;height:307.20px;background:#ececec;border-radius:2.5px 0 0 2.5px"></div>
<div class="r" style="left:691.00px;top:107.30px;width:6.00px;height:282.20px;background:#c3c3c3;border-radius:2.5px 0 0 2.5px"></div>
<div class="t" style="left:486.40px;top:422.80px;transform:scale(0.3650);color:#606266;font-weight:400;"><span class="c">共</span><span class="l"> </span><span class="d">38 </span><span class="c">条</span></div>
<div class="r" style="left:521.40px;top:416.40px;width:55.00px;height:18.20px;background:#fff;border:0.8px solid #dcdfe6;border-radius:2px;box-sizing:border-box"></div>
<div class="t" style="left:532.00px;top:422.20px;transform:scale(0.3600);color:#606266;font-weight:400;"><span class="d">15</span><span class="c">条</span><span class="l">/</span><span class="c">页</span></div>
<svg class="r" style="left:567.50px;top:424.00px" width="5" height="3" viewBox="0 0 5 3"><path d="M0.3 0.3 L2.5 2.6 L4.7 0.3" fill="none" stroke="#c0c4cc" stroke-width="0.7"/></svg>
<div class="r" style="left:587.60px;top:416.50px;width:16.20px;height:16.20px;background:#f4f4f5;border-radius:1.5px"></div>
<div class="r" style="left:609.20px;top:416.50px;width:16.20px;height:16.20px;background:#f4f4f5;border-radius:1.5px"></div>
<div class="r" style="left:631.00px;top:416.50px;width:16.20px;height:16.20px;background:#f4f4f5;border-radius:1.5px"></div>
<div class="r" style="left:653.20px;top:416.50px;width:16.20px;height:16.20px;background:#f4f4f5;border-radius:1.5px"></div>
<div class="r" style="left:675.00px;top:416.50px;width:16.20px;height:16.20px;background:#f4f4f5;border-radius:1.5px"></div>
<div class="r" style="left:609.20px;top:416.50px;width:16.20px;height:16.20px;background:#409eff;border-radius:1.5px"></div>
<svg class="r" style="left:593.80px;top:421.50px" width="4" height="6" viewBox="0 0 4 6"><path d="M3.2 0.5 L0.8 3 L3.2 5.5" fill="none" stroke="#c0c4cc" stroke-width="0.8"/></svg>
<svg class="r" style="left:681.30px;top:421.50px" width="4" height="6" viewBox="0 0 4 6"><path d="M0.8 0.5 L3.2 3 L0.8 5.5" fill="none" stroke="#606266" stroke-width="0.8"/></svg>
<div class="t" style="left:615.20px;top:421.70px;transform:scale(0.3950);color:#ffffff;font-weight:400;--sw:0.5px;"><span class="d">1</span></div>
<div class="t" style="left:636.80px;top:421.70px;transform:scale(0.3950);color:#505050;font-weight:400;--sw:0.5px;"><span class="d">2</span></div>
<div class="t" style="left:659.00px;top:421.70px;transform:scale(0.3950);color:#505050;font-weight:400;--sw:0.5px;"><span class="d">3</span></div></body></html>
